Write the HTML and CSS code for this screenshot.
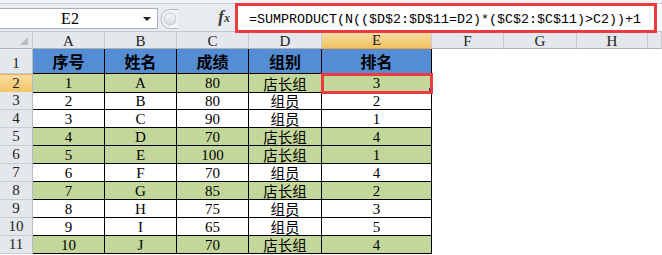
FILE: index.html
```html
<!DOCTYPE html>
<html lang="zh-CN">
<head>
<meta charset="UTF-8" />
<title>排名</title>
<link rel="stylesheet" href="styles.css">
</head>
<body>
  <!-- Formula bar -->
  <div class="formula-bar">
    <div class="name-box"><span class="name">E2</span><span class="drop"></span></div>
    <svg class="splitter" width="18" height="22" viewBox="0 0 18 22">
      <defs>
        <linearGradient id="knob" x1="0" y1="0" x2="0" y2="1">
          <stop offset="0" stop-color="#fbfbfc"/>
          <stop offset="1" stop-color="#d5d9de"/>
        </linearGradient>
      </defs>
      <path d="M18 1.5 H10.5 A9.5 9.5 0 0 0 10.5 20.5 H18" fill="#f3f4f6" stroke="#b4bac3"/>
      <circle cx="10" cy="11" r="6" fill="url(#knob)" stroke="#c3c8cf"/>
    </svg>
    <div class="fx">f<span>x</span></div>
    <div class="formula">=SUMPRODUCT(N(($D$2:$D$11=D2)*($C$2:$C$11)&gt;C2))+1</div>
    <div class="mark mark-formula"></div>
  </div>

  <!-- Sheet -->
  <div class="sheet">
    <div class="col-head">
      <div class="corner"></div>
      <div>A</div><div>B</div><div>C</div><div>D</div><div class="sel">E</div>
      <div>F</div><div>G</div><div>H</div><div></div>
    </div>

    <div class="row title">
      <div class="rh">1</div>
      <div class="c">序号</div><div class="c">姓名</div><div class="c">成绩</div><div class="c">组别</div><div class="c">排名</div>
      <div class="rest"></div>
    </div>
    <div class="row lead">
      <div class="rh sel">2</div>
      <div class="c">1</div><div class="c">A</div><div class="c">80</div><div class="c cn">店长组</div><div class="c">3</div>
      <div class="rest"></div>
    </div>
    <div class="row">
      <div class="rh">3</div>
      <div class="c">2</div><div class="c">B</div><div class="c">80</div><div class="c cn">组员</div><div class="c">2</div>
      <div class="rest"></div>
    </div>
    <div class="row">
      <div class="rh">4</div>
      <div class="c">3</div><div class="c">C</div><div class="c">90</div><div class="c cn">组员</div><div class="c">1</div>
      <div class="rest"></div>
    </div>
    <div class="row lead">
      <div class="rh">5</div>
      <div class="c">4</div><div class="c">D</div><div class="c">70</div><div class="c cn">店长组</div><div class="c">4</div>
      <div class="rest"></div>
    </div>
    <div class="row lead">
      <div class="rh">6</div>
      <div class="c">5</div><div class="c">E</div><div class="c">100</div><div class="c cn">店长组</div><div class="c">1</div>
      <div class="rest"></div>
    </div>
    <div class="row">
      <div class="rh">7</div>
      <div class="c">6</div><div class="c">F</div><div class="c">70</div><div class="c cn">组员</div><div class="c">4</div>
      <div class="rest"></div>
    </div>
    <div class="row lead">
      <div class="rh">8</div>
      <div class="c">7</div><div class="c">G</div><div class="c">85</div><div class="c cn">店长组</div><div class="c">2</div>
      <div class="rest"></div>
    </div>
    <div class="row">
      <div class="rh">9</div>
      <div class="c">8</div><div class="c">H</div><div class="c">75</div><div class="c cn">组员</div><div class="c">3</div>
      <div class="rest"></div>
    </div>
    <div class="row">
      <div class="rh">10</div>
      <div class="c">9</div><div class="c">I</div><div class="c">65</div><div class="c cn">组员</div><div class="c">5</div>
      <div class="rest"></div>
    </div>
    <div class="row lead">
      <div class="rh">11</div>
      <div class="c">10</div><div class="c">J</div><div class="c">70</div><div class="c cn">店长组</div><div class="c">4</div>
      <div class="rest"></div>
    </div>

    <div class="handle"></div>
    <div class="mark mark-cell"></div>
  </div>
</body>
</html>
```

FILE: styles.css
```css
* { box-sizing: border-box; margin: 0; padding: 0; }
body {
  width: 662px; height: 255px; overflow: hidden;
  background: #fff; color: #000;
  font-family: "Liberation Serif", "Noto Sans CJK SC", serif;
  font-size: 15px;
}

/* Formula bar */
.formula-bar {
  position: relative; display: flex; height: 31px;
  background: linear-gradient(#f2f3f5 0 3px, #c9ced5 3px 4px, #e8ebef 4px);
}
.name-box {
  display: flex; align-items: center;
  width: 159px; height: 21px; margin: 8px 0 0 -1px;
  background: #fff; border: 1px solid #a9b0ba;
}
.name { flex: 1; text-align: center; line-height: 17px; font-size: 16px; }
.drop { width: 17px; display: flex; justify-content: center; padding-right: 3px; }
.drop::after {
  content: ""; border-left: 4px solid transparent; border-right: 4px solid transparent;
  border-top: 4px solid #1e1e1e;
}
.splitter { margin: 8px 0 0 2px; }
.fx {
  width: 57px; display: flex; justify-content: flex-end; align-items: baseline;
  padding: 8px 5px 0 0;
  font-style: italic; font-weight: 700;
  font-size: 17px; line-height: 18px; color: #3a3a3a;
}
.fx span { font-size: 12px; }
.formula {
  flex: 1; margin-top: 4px; height: 27px;
  background: #fff; padding: 8px 0 0 14px;
  font-family: "Liberation Mono", monospace;
  font-size: 13.33px; line-height: 16px; white-space: nowrap;
}

/* Red callouts */
.mark { position: absolute; border: 3px solid #ec3a3e; z-index: 2; }
.mark-formula { left: 235px; top: 3px; width: 422px; height: 30px; }
.mark-cell { left: 321px; top: 42px; width: 112px; height: 21px; }
.handle {
  position: absolute; left: 429px; top: 57px; width: 4px; height: 4px;
  background: #1d3b6a; z-index: 1;
}

/* Sheet */
.sheet { position: relative; }
.col-head {
  display: grid; height: 18px;
  grid-template-columns: 33px 72px 72px 72px 73px 110px 72px 73px 71px 1fr;
  background: #e4e7eb;
  border-top: 1px solid #c3c8cf; border-bottom: 1px solid #aab1bb;
}
.col-head div {
  display: flex; justify-content: center; align-items: center;
  border-right: 1px solid #c5cad1; line-height: 16px;
  color: #222;
}
.col-head .sel {
  background: linear-gradient(#f9dea6, #f1c25f);
  border-bottom: 2px solid #eba143; margin-bottom: -1px;
}
.corner { position: relative; }
.corner::after {
  content: ""; position: absolute; left: 20px; top: 5px; width: 8px; height: 8px;
  background: #b9bec6; clip-path: polygon(100% 0, 100% 100%, 0 100%);
}

.row {
  display: grid; height: 18px;
  grid-template-columns: 33px 72px 72px 72px 73px 110px 1fr;
}
.row.title { height: 25px; }
.rh {
  display: flex; justify-content: center; align-items: flex-end;
  background: #e4e7ec; color: #222;
  border-right: 1px solid #b5bcc5; border-bottom: 1px solid #c9cdd3;
  line-height: 16px; padding-bottom: 1px;
}
.title .rh { padding-bottom: 2px; }
.rh.sel {
  background: linear-gradient(#f9dca2, #f2c566);
  border-bottom-color: #e6a548; border-top: 1px solid #eab15a;
}
.c {
  display: flex; justify-content: center; align-items: center;
  border-right: 1px solid #000; border-bottom: 1px solid #000;
  line-height: 16px; white-space: nowrap;
}
.c.cn { font-family: "Noto Sans CJK SC", sans-serif; font-size: 14.5px; line-height: 17px; }
.title .c {
  background: #548dd4;
  font-family: "Noto Sans CJK SC", sans-serif; font-weight: 700; font-size: 16px;
  line-height: 22px;
}
.lead .c { background: #c4d79b; }
.rest { background: #fff; }
```
